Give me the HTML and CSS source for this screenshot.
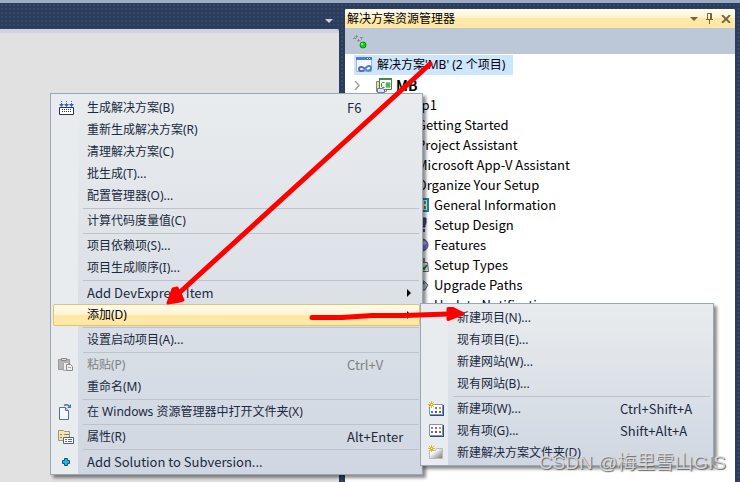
FILE: index.html
```html
<!DOCTYPE html>
<html lang="zh-CN">
<head>
    <meta charset="UTF-8">
    <meta name="viewport" content="width=device-width, initial-scale=1.0">
    <title>解决方案资源管理器</title>
    <link rel="stylesheet" href="styles.css">
</head>
<body>
    <div class="workspace">
        <!-- Editor area -->
        <main class="editor">
            <div class="editor-tabs">
                <button class="tab-list-btn" aria-label="Tabs">
                    <svg width="8" height="4" viewBox="0 0 8 4"><path d="M0 0h8L4 4z" fill="#ced4df"/></svg>
                </button>
            </div>
            <div class="editor-page"></div>
        </main>

        <!-- Solution explorer -->
        <aside class="explorer">
            <header class="explorer-title">
                <span>解决方案资源管理器</span>
                <div class="title-buttons">
                    <button aria-label="Menu"><svg width="8" height="4" viewBox="0 0 8 4"><path d="M0 0h8L4 4z" fill="#75633d"/></svg></button>
                    <button aria-label="Pin"><svg width="7" height="11" viewBox="0 0 7 11"><path d="M1.5 6V.5h4V6M4.5 1v5M0 6.5h7M3.5 6v5" stroke="#75633d" fill="none"/></svg></button>
                    <button aria-label="Close"><svg width="10" height="8" viewBox="0 0 10 8"><path d="M1 0l8 8M9 0L1 8" stroke="#75633d" stroke-width="1.8" fill="none"/></svg></button>
                </div>
            </header>
            <div class="explorer-toolbar">
                <button aria-label="Refresh">
                    <svg width="14" height="15" viewBox="0 0 14 15">
                        <path d="M1.500 5V3.500l1-1H5M3.500 1v3M8.500 3v2.500l-1 1H4M5.500 5v3M0 4.500h3M7 3.500h3" fill="none" stroke="#8b8d90"/>
                        <circle cx="10" cy="11" r="3" fill="#0bdc0b" stroke="#078a12"/>
                        <circle cx="9" cy="10" r="1" fill="#a6ffa0"/>
                    </svg>
                </button>
            </div>
            <ul class="tree">
                <li class="tree-root">
                    <span class="selected">
                        <svg width="17" height="16" viewBox="0 0 17 16">
                            <path d="M.5.5h15v14H.5z" fill="#f4f8fe" stroke="#9db5df"/>
                            <path d="M0 0h16v3H0z" fill="#4a7fd8"/><path d="M11 1h1v1h-1zM13 1h1v1h-1z" fill="#fff"/>
                            <path d="M9 12C7 9 3 9.500 3 12s4 3 6 0" fill="none" stroke="#5b66ae" stroke-width="2"/>
                            <path d="M9 12c2-3.500 6-4 6-1s-4 3.500-6 1" fill="none" stroke="#4a83c4" stroke-width="2"/>
                        </svg>
                        解决方案'MB' (2 个项目)
                    </span>
                </li>
                <li class="tree-project">
                    <svg class="expander" width="6" height="9" viewBox="0 0 6 9"><path d="M1 0l4 4.500L1 9" fill="none" stroke="#a2a2a2" stroke-width="1.5"/></svg>
                    <svg width="16" height="15" viewBox="0 0 16 15">
                        <path d="M.5 3.500h10v10H.5z" fill="#f2d894" stroke="#998461"/>
                        <path d="M3.500.5h12v11h-12z" fill="#fff" stroke="#468045"/>
                        <path d="M3 0h13v2H3z" fill="#3f8c42"/>
                        <path d="M8.500 4.500h-2l-1 1v3l1 1h2M9.500 6h5M9.500 8h5M11 4v6M13 4v6" fill="none" stroke="#159825"/>
                        <path d="M1.500 10.500h5l2 1v3h-7z" fill="#dce6f6" stroke="#6578ab"/>
                    </svg>
                    <strong>MB</strong>
                </li>
                <li class="tree-project plain">Setup1</li>
                <li class="tree-group">Getting Started</li>
                <li class="tree-group">Project Assistant</li>
                <li class="tree-group">Microsoft App-V Assistant</li>
                <li class="tree-group">Organize Your Setup</li>
                <li class="tree-leaf">
                    <svg width="16" height="14" viewBox="0 0 16 14"><path d="M1 1h14v12H1z" fill="#edf5f7" stroke="#1986ae" stroke-width="2"/><path d="M11 3h2v3h-2z" fill="#4ca25b"/><path d="M11 8h2v3h-2z" fill="#a5683c"/></svg>
                    General Information
                </li>
                <li class="tree-leaf">
                    <svg width="16" height="16" viewBox="0 0 16 16"><path d="M8 1h5v5l-1 2v2H8z" fill="#4c5285" stroke="#30355e"/><path d="M9 12h3v3H9z" fill="#4c5285"/></svg>
                    Setup Design
                </li>
                <li class="tree-leaf">
                    <svg width="16" height="16" viewBox="0 0 16 16"><circle cx="9" cy="8" r="6" fill="#7575d6" stroke="#3d3f85"/><circle cx="11" cy="6" r="2" fill="#bcbcf0"/></svg>
                    Features
                </li>
                <li class="tree-leaf">
                    <svg width="16" height="16" viewBox="0 0 16 16"><path d="M9 1h3v4H9z" fill="#888"/><path d="M6.500 5.500h8l1 9h-9z" fill="#e8eaf2" stroke="#596276"/><path d="M9 10l2 2 3-4" stroke="#168a20" stroke-width="2" fill="none"/></svg>
                    Setup Types
                </li>
                <li class="tree-leaf">
                    <svg width="16" height="16" viewBox="0 0 16 16"><path d="M8 4h3l4 4-3 5H8z" fill="#b9c1c7" stroke="#596276"/><path d="M8 2l4 5H7z" fill="#226d2b"/></svg>
                    Upgrade Paths
                </li>
                <li class="tree-leaf"><svg width="16" height="16" viewBox="0 0 16 16"><path d="M2 3h8v10H2z" fill="#b9c1c7"/></svg>Update Notifications</li>
            </ul>
        </aside>
    </div>

    <!-- Context menu of the solution -->
    <div class="menu context-menu" role="menu">
        <button class="menu-item">
            <svg width="16" height="16" viewBox="0 0 16 16">
                <path d="M3.500 1v5M8.500 1v5M13.500 1v5" stroke="#3a6fd0" stroke-dasharray="1 1"/>
                <path d="M1 4h5L3.500 7zM6 4h5L8.500 7zM11 4h5l-2.500 3z" fill="#2f62cf"/>
                <path d="M1.500 7.500h14v7h-14z" fill="#fff" stroke="#29355c"/>
                <path d="M4 9.500h10M4 11.500h10" stroke="#29355c" stroke-dasharray="1 1"/>
            </svg>
            <span>生成解决方案(B)</span><kbd>F6</kbd>
        </button>
        <button class="menu-item"><i></i><span>重新生成解决方案(R)</span></button>
        <button class="menu-item"><i></i><span>清理解决方案(C)</span></button>
        <button class="menu-item"><i></i><span>批生成(T)...</span></button>
        <button class="menu-item"><i></i><span>配置管理器(O)...</span></button>
        <hr>
        <button class="menu-item"><i></i><span>计算代码度量值(C)</span></button>
        <hr>
        <button class="menu-item"><i></i><span>项目依赖项(S)...</span></button>
        <button class="menu-item"><i></i><span>项目生成顺序(I)...</span></button>
        <hr>
        <button class="menu-item latin"><i></i><span>Add DevExpress Item</span><svg class="more" width="4" height="8" viewBox="0 0 4 8"><path d="M0 0l4 4-4 4z"/></svg></button>
        <div class="submenu-holder">
            <button class="menu-item active"><i></i><span>添加(D)</span><svg class="more" width="4" height="8" viewBox="0 0 4 8"><path d="M0 0l4 4-4 4z"/></svg></button>
            <div class="menu submenu" role="menu">
                <button class="menu-item"><i></i><span>新建项目(N)...</span></button>
                <button class="menu-item"><i></i><span>现有项目(E)...</span></button>
                <button class="menu-item"><i></i><span>新建网站(W)...</span></button>
                <button class="menu-item"><i></i><span>现有网站(B)...</span></button>
                <hr>
                <button class="menu-item">
                    <svg width="16" height="16" viewBox="0 0 16 16">
                        <path d="M1.500 3.500h13v10h-13z" fill="#fff" stroke="#7d92bd"/><path d="M2 14.500h14M15.500 4v11" stroke="#334a78"/>
                        <path d="M7 6h2v2H7z" fill="#7b68c8"/><path d="M11 6h2v2h-2z" fill="#f08b1d"/><path d="M3 10h2v2H3z" fill="#2f7be8"/><path d="M7 10h2v2H7z" fill="#e42222"/><path d="M11 10h2v2h-2z" fill="#22a63a"/>
                        <path d="M3.500 0v7M0 3.500h7M1 1l5 5M6 1L1 6" stroke="#e3b71f"/><path d="M3 3h1v1H3z" fill="#fff"/>
                    </svg>
                    <span>新建项(W)...</span><kbd>Ctrl+Shift+A</kbd>
                </button>
                <button class="menu-item">
                    <svg width="16" height="16" viewBox="0 0 16 16">
                        <path d="M1.500 1.500h13v11h-13z" fill="#fff" stroke="#7d92bd"/><path d="M2 13.500h14M15.500 2v12" stroke="#334a78"/>
                        <path d="M3 4h2v2H3z" fill="#d058b8"/><path d="M7 4h2v2H7z" fill="#7b68c8"/><path d="M11 4h2v2h-2z" fill="#f08b1d"/><path d="M3 8h2v2H3z" fill="#2f7be8"/><path d="M7 8h2v2H7z" fill="#e42222"/><path d="M11 8h2v2h-2z" fill="#22a63a"/>
                    </svg>
                    <span>现有项(G)...</span><kbd>Shift+Alt+A</kbd>
                </button>
                <button class="menu-item">
                    <svg width="16" height="16" viewBox="0 0 16 16">
                        <defs><linearGradient id="folder" x2="1" y2="1"><stop offset=".3" stop-color="#fff"/><stop offset="1" stop-color="#777"/></linearGradient></defs>
                        <path d="M1.500 5.500h6l1-2h6v10h-13z" fill="url(#folder)" stroke="#bbb"/>
                        <path d="M3.500 0v7M0 3.500h7M1 1l5 5M6 1L1 6" stroke="#e3b71f"/><path d="M3 3h1v1H3z" fill="#fff"/>
                    </svg>
                    <span>新建解决方案文件夹(D)</span>
                </button>
            </div>
        </div>
        <hr>
        <button class="menu-item"><i></i><span>设置启动项目(A)...</span></button>
        <hr>
        <button class="menu-item" disabled>
            <svg width="16" height="16" viewBox="0 0 16 16">
                <path d="M.5 2.500h11v10H.5z" fill="#b5b5b5" stroke="#999"/><path d="M3.500 1.500h5v2h-5z" fill="#ddd" stroke="#888"/>
                <path d="M5.500 5.500h5v8h-5z" fill="#eee" stroke="#aaa"/><path d="M8.500 7.500h4l2 2v4h-6z" fill="#eee" stroke="#8a8a8a"/><path d="M10 10.500h3" stroke="#aaa"/>
            </svg>
            <span>粘贴(P)</span><kbd>Ctrl+V</kbd>
        </button>
        <button class="menu-item"><i></i><span>重命名(M)</span></button>
        <hr>
        <button class="menu-item">
            <svg width="16" height="16" viewBox="0 0 16 16">
                <path d="M1.500 3.500h6l3 3v9h-9z" fill="#f6f9fd" stroke="#586e98"/><path d="M7.500 3.500v3h3" fill="#ccd8ea" stroke="#586e98"/>
                <path d="M6 1.500q4-2 5 1" fill="none" stroke="#5275ad" stroke-width="1.5"/><path d="M9 4h4V0z" fill="#5275ad"/>
            </svg>
            <span>在 Windows 资源管理器中打开文件夹(X)</span>
        </button>
        <hr>
        <button class="menu-item">
            <svg width="16" height="16" viewBox="0 0 16 16">
                <path d="M.5 11.500v-10h5l1 1h5v9z" fill="#f3e4b0" stroke="#a19777"/><path d="M2 5.500h2M6 5.500h5M2 8.500h2" stroke="#8c8260"/>
                <path d="M5.500 8.500h10v6h-10z" fill="#fff" stroke="#4d618e"/><path d="M7 10.500h2M10 10.500h4M7 12.500h2M10 12.500h4" stroke="#5c6e9b"/>
            </svg>
            <span>属性(R)</span><kbd>Alt+Enter</kbd>
        </button>
        <hr>
        <button class="menu-item latin">
            <svg width="16" height="16" viewBox="0 0 16 16"><path d="M6.500 4.500h3v2h2v3h-2v2h-3v-2h-2v-3h2z" fill="#28b2e0" stroke="#085b85"/></svg>
            <span>Add Solution to Subversion...</span>
        </button>
    </div>

    <!-- Red arrows over the menus -->
    <svg class="arrows" width="740" height="482" viewBox="0 0 740 482">
        <g stroke="#f00" fill="#f00" stroke-linecap="round" stroke-linejoin="round">
            <path d="M430 64L178 294" stroke-width="5" fill="none"/>
            <path d="M168 303l5-14 4-1 6 12-3 1z" stroke-width="3"/>
            <path d="M312 317.500h30l30-2h32l44-1.500" stroke-width="5" fill="none"/>
            <path d="M448 308.500h5l10 5-15 6z" stroke-width="3"/>
        </g>
    </svg>
    <div class="watermark">CSDN @梅里雪山GIS</div>
</body>
</html>
```
FILE: styles.css
```css
* {
    box-sizing: border-box;
}
body {
    margin: 0;
    overflow: hidden;
    font-family: "Noto Sans", "Noto Sans CJK SC", sans-serif;
    font-size: 12px;
    line-height: 20px;
    color: #000;
}
button {
    border: none;
    background: none;
    padding: 0;
    font: inherit;
    color: inherit;
}
svg {
    display: block;
    flex: none;
}
.workspace {
    display: flex;
    gap: 6px;
    min-height: 100vh;
    padding: 6px 5px 0 0;
    border-top: 3px solid #9eadc6;
    background-color: #2c3d5b;
    background-image: radial-gradient(#35496a 1px, transparent 1px);
    background-size: 4px 4px;
}
.editor {
    flex: 1;
    display: flex;
    flex-direction: column;
}
.editor-tabs {
    display: flex;
    justify-content: flex-end;
    align-items: center;
    height: 20px;
    padding: 3px 6px 0 0;
}
.editor-page {
    flex: 1;
    background: #e1e1e1;
    border-top: 4px solid #ced4df;
    border-top-right-radius: 2px;
}
.explorer {
    display: flex;
    flex-direction: column;
    width: 390px;
    background: #fff;
    border-radius: 2px 2px 0 0;
    overflow: hidden;
}
.explorer-title {
    display: flex;
    justify-content: space-between;
    align-items: center;
    height: 19px;
    padding: 0 4px 0 2px;
    background: linear-gradient(#fffcf2, #fff2cd 50%, #ffe8a6 50%);
}
.title-buttons {
    display: flex;
    align-items: center;
    gap: 8px;
}
.explorer-toolbar {
    height: 26px;
    padding: 6px 8px;
    background: #bcc7d8;
}
.tree {
    margin: 0;
    padding: 1px 0 0;
    list-style: none;
    white-space: nowrap;
}
.tree li {
    display: flex;
    align-items: center;
    height: 20px;
    font-family: "Noto Sans CJK SC", sans-serif;
    font-size: 13px;
}
.tree .tree-root {
    padding-left: 9px;
    font-family: "Noto Sans", "Noto Sans CJK SC", sans-serif;
    font-size: 12px;
}
.selected {
    display: flex;
    align-items: center;
    gap: 4px;
    padding: 0 8px 0 2px;
    background: #cde6ff;
}
.tree-project {
    gap: 4px;
    padding-left: 9px;
}
.tree-project strong {
    font-size: 14px;
}
.expander {
    margin-right: 12px;
}
.tree-project.plain {
    padding-left: 49px;
}
.tree-group {
    padding-left: 72px;
}
.tree-leaf {
    gap: 5px;
    padding-left: 68px;
}

/* Menus */
.menu {
    position: absolute;
    padding: 3px 2px 1px;
    border: 1px solid #9ba7b7;
    background: linear-gradient(90deg, #e9ecee 27px, transparent 27px), linear-gradient(#e9ecee, #d0d7e2);
    box-shadow: 3px 3px 3px rgba(0, 0, 0, 0.45);
    color: #1b293e;
}
.context-menu {
    left: 50px;
    top: 93px;
    width: 373px;
}
.submenu-holder {
    position: relative;
}
.submenu {
    left: 100%;
    top: -1px;
    width: 294px;
}
.menu-item {
    display: flex;
    align-items: center;
    width: 100%;
    height: 22px;
    padding: 0 9px 0 5px;
    text-align: left;
    white-space: nowrap;
}
.menu-item i {
    width: 16px;
}
.menu-item span {
    flex: 1;
    padding-left: 13px;
}
.menu-item kbd {
    width: 64px;
    font-family: "Noto Sans CJK SC", sans-serif;
    font-size: 13px;
}
.submenu .menu-item kbd {
    width: 82px;
}
.menu-item:disabled {
    color: #808080;
}
.menu-item.active {
    border: 1px solid #e5c365;
    border-radius: 2px;
    padding: 0 8px 0 4px;
    background: linear-gradient(#fffcf2, #fff2cd 50%, #ffe8a6 50%);
    color: #000;
}
.menu-item.latin {
    font-family: "Noto Sans CJK SC", sans-serif;
    font-size: 13px;
}
.menu hr {
    height: 1px;
    margin: 1px 1px 1px 30px;
    border: none;
    background: #bec3cb;
}

.arrows {
    position: absolute;
    left: 0;
    top: 0;
}
.watermark {
    position: absolute;
    right: 14px;
    bottom: 7px;
    font-family: "Liberation Sans", "Noto Sans CJK SC", sans-serif;
    font-size: 19px;
    line-height: 24px;
    color: rgba(225, 225, 225, 0.85);
    text-shadow: 1px 1px 1px #666;
}
```
